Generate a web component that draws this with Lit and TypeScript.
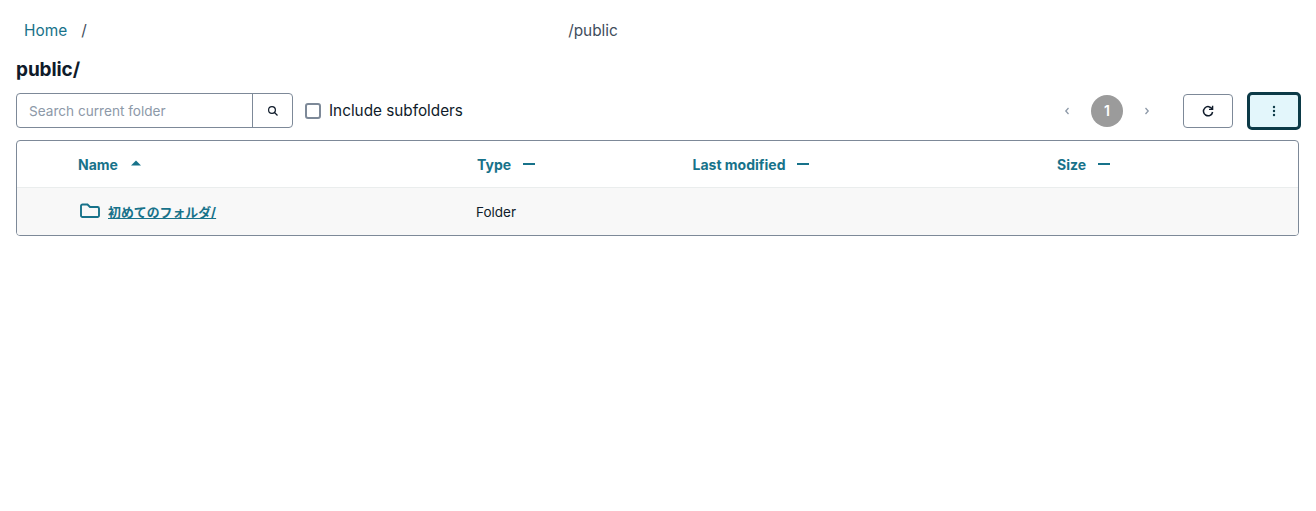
import { LitElement, css, html } from 'lit';
import { customElement } from 'lit/decorators.js';

@customElement('app-root')
export class AppRoot extends LitElement {
  static styles = css`
    :host {
      display: block;
      padding: 0 17px 0 16px;
      font-family: Inter, 'Liberation Sans', sans-serif;
      color: #0f1b2a;
      background: #fff;
      height: 511px;
      box-sizing: border-box;
    }

    .crumbs {
      display: flex;
      align-items: center;
      height: 20px;
      padding: 21px 0 0 8px;
      font-size: 15.4px;
      line-height: 20px;
      color: #414d5c;
    }

    .crumbs a {
      color: #17728a;
      text-decoration: none;
    }

    .sep {
      margin-left: 14px;
      width: 487px;
    }

    h1 {
      margin: 18px 0 0;
      font-size: 19px;
      line-height: 22px;
      font-weight: 700;
      letter-spacing: -0.1px;
    }

    .toolbar {
      display: flex;
      align-items: center;
      margin-top: 12px;
      height: 35px;
    }

    .search {
      display: flex;
      width: 277px;
      height: 35px;
      box-sizing: border-box;
      border: 1px solid #7d8998;
      border-radius: 4px;
    }

    .search .input {
      flex: 1;
      padding: 1px 0 0 12px;
      font-size: 13.6px;
      line-height: 33px;
      color: #8d99a8;
      border-right: 1px solid #7d8998;
    }

    .search .go {
      width: 39px;
      display: flex;
      align-items: center;
      justify-content: center;
    }

    .check {
      display: flex;
      align-items: center;
      gap: 8px;
      margin-left: 12px;
      font-size: 15.3px;
      line-height: 20px;
      padding-top: 1px;
    }

    .box {
      flex: none;
      width: 12px;
      height: 12px;
      margin-top: -1px;
      border: 2px solid #7d8998;
      border-radius: 3px;
    }

    .pager {
      display: flex;
      align-items: center;
      margin-left: auto;
      font-size: 14px;
    }

    .arrow {
      width: 48px;
      display: flex;
      justify-content: center;
    }

    .page {
      width: 32px;
      height: 32px;
      border-radius: 50%;
      background: #9b9b9b;
      color: #fff;
      font-weight: 600;
      display: flex;
      align-items: center;
      justify-content: center;
    }

    .btn {
      box-sizing: border-box;
      display: flex;
      align-items: center;
      justify-content: center;
      height: 34px;
      width: 50px;
      border: 1px solid #7d8998;
      border-radius: 4px;
    }

    .refresh {
      margin-left: 12px;
    }

    .more {
      margin: 0 -2px 0 14px;
      width: 54px;
      height: 38px;
      border: 3px solid #0c3a47;
      border-radius: 5px;
      background: #e3f6fb;
    }

    .table {
      box-sizing: border-box;
      margin-top: 12px;
      height: 96px;
      border: 1px solid #7d8998;
      border-radius: 4px;
      overflow: hidden;
    }

    .row {
      display: grid;
      grid-template-columns: 399px 215.5px 364.5px 1fr;
      padding-left: 61px;
      align-items: center;
    }

    .head {
      box-sizing: border-box;
      height: 47px;
      padding-top: 1px;
      border-bottom: 1px solid #eaeded;
      font-size: 14px;
      font-weight: 700;
      color: #17728a;
    }

    .head .cell {
      display: flex;
      align-items: center;
      gap: 12px;
    }

    .dash {
      width: 12px;
      height: 2px;
      margin-top: -2px;
      background: #17728a;
    }

    .sort {
      margin-top: -3px;
    }

    .body {
      height: 47px;
      background: #f8f8f8;
      font-size: 13.5px;
    }

    .type {
      margin-left: -1px;
    }

    .name {
      display: flex;
      align-items: center;
      gap: 8px;
      padding-left: 2px;
    }

    .name svg {
      margin-top: -2px;
    }

    .name a {
      color: #17728a;
      font-weight: 700;
      font-size: 12.9px;
      text-decoration: underline;
      font-family: Inter, 'Noto Sans CJK JP', sans-serif;
    }
  `;

  render() {
    return html`
      <nav class="crumbs">
        <a href="#">Home</a>
        <span class="sep">/</span>
        <span>/public</span>
      </nav>
      <h1>public/</h1>
      <div class="toolbar">
        <div class="search">
          <div class="input">Search current folder</div>
          <div class="go">
            <svg width="12" height="12" viewBox="0 0 12 12" fill="none" stroke="#0f1b2a" stroke-width="1.2">
              <circle cx="5" cy="5" r="3.4"></circle>
              <path d="M7.5 7.5 10.5 10.5"></path>
            </svg>
          </div>
        </div>
        <label class="check"><span class="box"></span>Include subfolders</label>
        <div class="pager">
          <span class="arrow">
            <svg width="8" height="10" viewBox="0 0 8 10" fill="none" stroke="#8d99a8" stroke-width="1.3"><path d="M5.5 2 2.8 5l2.7 3"></path></svg>
          </span>
          <span class="page">1</span>
          <span class="arrow">
            <svg width="8" height="10" viewBox="0 0 8 10" fill="none" stroke="#8d99a8" stroke-width="1.3"><path d="M2.5 2 5.2 5 2.5 8"></path></svg>
          </span>
        </div>
        <div class="btn refresh">
          <svg width="14" height="14" viewBox="0 0 14 14" fill="none" stroke="#0f1b2a" stroke-width="1.5">
            <path d="M11.2 5.2A4.6 4.6 0 1 0 11.6 8"></path>
            <path d="M11.6 1.8v3.6H8" stroke-width="1.4"></path>
          </svg>
        </div>
        <div class="btn more">
          <svg width="4" height="12" viewBox="0 0 4 12" fill="#0c3a47">
            <circle cx="2" cy="2" r="1.2"></circle>
            <circle cx="2" cy="6" r="1.2"></circle>
            <circle cx="2" cy="10" r="1.2"></circle>
          </svg>
        </div>
      </div>
      <div class="table">
        <div class="row head">
          <div class="cell">
            Name
            <svg class="sort" width="12" height="6" viewBox="0 0 12 6" fill="#17728a"><path d="M6 0.5 11 5.5H1z"></path></svg>
          </div>
          <div class="cell">Type<span class="dash"></span></div>
          <div class="cell">Last modified<span class="dash"></span></div>
          <div class="cell">Size<span class="dash"></span></div>
        </div>
        <div class="row body">
          <div class="name">
            <svg width="20" height="16" viewBox="0 0 20 16" fill="none" stroke="#17728a" stroke-width="1.9">
              <path d="M1 3a1.5 1.5 0 0 1 1.5-1.5h5L10 4h7.5A1.5 1.5 0 0 1 19 5.5v7a1.5 1.5 0 0 1-1.5 1.5h-15A1.5 1.5 0 0 1 1 12.5z"></path>
            </svg>
            <a href="#">初めてのフォルダ/</a>
          </div>
          <div class="type">Folder</div>
          <div></div>
          <div></div>
        </div>
      </div>
    `;
  }
}
